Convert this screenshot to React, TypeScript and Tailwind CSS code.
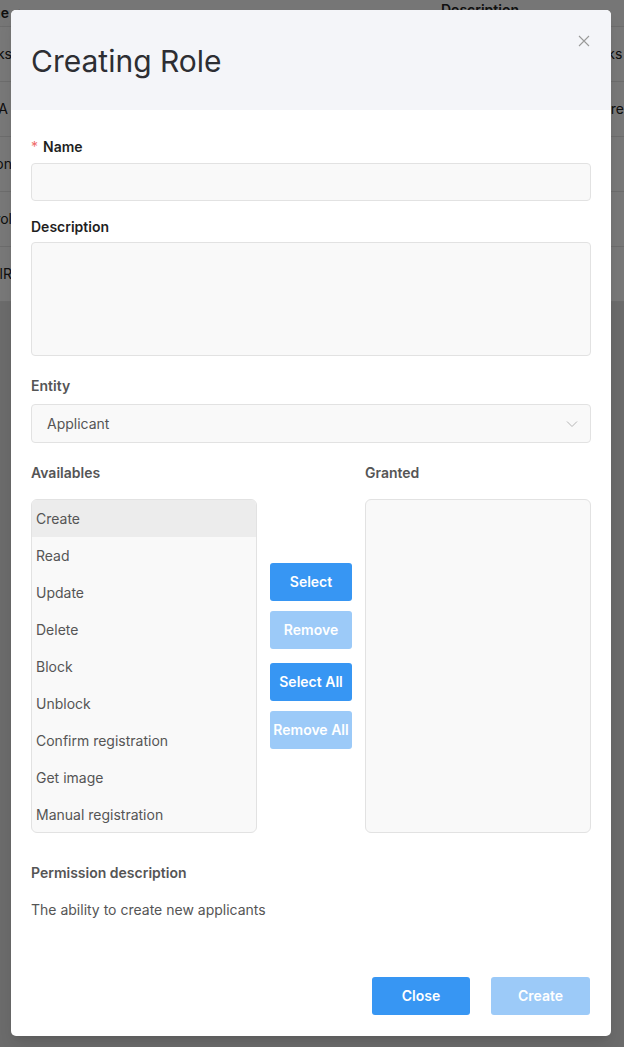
import React from 'react';

const rows = [
    { left: 'Tasks', right: 'Tasks', offset: 'ml-[572px]' },
    { left: 'UserA', right: 'Hire', offset: 'ml-[589px]' },
    { left: 'Operation', right: '', offset: 'ml-[600px]' },
    { left: 'Control', right: '', offset: 'ml-[600px]' },
    { left: 'MailR', right: '', offset: 'ml-[600px]' },
];

const permissions = [
    'Create',
    'Read',
    'Update',
    'Delete',
    'Block',
    'Unblock',
    'Confirm registration',
    'Get image',
    'Manual registration',
];

const BackgroundTable = () => {
    return (
        <div className="w-full">
            <div className="flex h-[27px] items-center bg-[#fafafa] border-b border-[#e5e5e5] text-sm font-semibold text-[#222]">
                <div className="w-[441px] flex items-center">
                    <div className="w-[9px] overflow-hidden whitespace-nowrap flex justify-end">
                        <span>Name</span>
                    </div>
                    <span className="ml-[5px] text-[10px] text-[#999]">▲</span>
                </div>
                <div className="translate-y-[-3px]">Description</div>
            </div>
            {rows.map((r) => (
                <div key={r.left} className="flex h-[55px] items-center bg-white border-b border-[#e5e5e5] text-sm text-[#222]">
                    <div className="w-[12px] overflow-hidden whitespace-nowrap flex justify-end">
                        <span>{r.left}</span>
                    </div>
                    <div className={`${r.offset} whitespace-nowrap`}>{r.right}</div>
                </div>
            ))}
        </div>
    );
};

const Label = ({ children, dark }: { children: React.ReactNode; dark?: boolean }) => (
    <div className={`h-5 flex items-center text-sm font-semibold ${dark ? 'text-[#1f1f1f]' : 'text-[#555]'}`}>{children}</div>
);

export default function App() {
    return (
        <div className="relative h-[1047px] w-[624px] overflow-hidden bg-[#e4e4e4] font-['Inter',sans-serif]">
            <BackgroundTable />
            <div className="absolute inset-0 bg-black/[0.53]"></div>

            <div className="absolute left-[11px] top-[10px] w-[600px] h-[1026px] bg-white rounded-[5px] shadow-lg overflow-hidden flex flex-col">
                <div className="h-[100px] bg-[#f4f5f9] flex items-center justify-between px-5 shrink-0">
                    <h2 className="text-[30px] text-[#2d2e33] pt-[2px] leading-none">Creating Role</h2>
                    <button className="self-start mt-[25px] mr-[1px] text-[#9a9a9a]">
                        <svg width="12" height="12" viewBox="0 0 12 12" fill="none" stroke="currentColor" strokeWidth="1.1">
                            <path d="M1 1L11 11M11 1L1 11" />
                        </svg>
                    </button>
                </div>

                <div className="flex-1 px-5 pt-[27px] pb-[21px] flex flex-col">
                    <Label dark>
                        <span className="text-[#ef6b6b] mr-[5px] font-normal">*</span>Name
                    </Label>
                    <div className="mt-[6px] h-[38px] rounded-[4px] border border-[#e2e2e2] bg-[#f9f9f9]"></div>

                    <div className="mt-[16px]">
                        <Label dark>Description</Label>
                    </div>
                    <div className="mt-[5px] h-[114px] rounded-[4px] border border-[#e2e2e2] bg-[#f9f9f9]"></div>

                    <div className="mt-[20px]">
                        <Label>Entity</Label>
                    </div>
                    <div className="mt-[8px] h-[39px] rounded-[4px] border border-[#e2e2e2] bg-[#f9f9f9] flex items-center justify-between pl-[15px] pr-[12px]">
                        <span className="text-sm text-[#555]">Applicant</span>
                        <svg width="12" height="8" viewBox="0 0 12 8" fill="none" stroke="#b5b5b5" strokeWidth="1">
                            <path d="M1 1.5L6 6.5L11 1.5" />
                        </svg>
                    </div>

                    <div className="mt-[20px] flex gap-[13px]">
                        <div className="w-[226px]">
                            <Label>Availables</Label>
                            <div className="mt-[16px] h-[334px] rounded-[6px] border border-[#e2e2e2] bg-[#f9f9f9] overflow-hidden">
                                {permissions.map((p, i) => (
                                    <div key={p} className={`h-[37px] flex items-center px-[4px] text-sm text-[#555] ${i === 0 ? 'bg-[#ececec]' : ''}`}>
                                        {p}
                                    </div>
                                ))}
                            </div>
                        </div>
                        <div className="w-[82px] pt-[100px] flex flex-col">
                            <button className="h-[38px] rounded-[3px] bg-[#3796f3] text-white text-sm font-semibold">Select</button>
                            <button className="mt-[10px] h-[38px] rounded-[3px] bg-[#9ccaf8] text-white text-sm font-semibold">Remove</button>
                            <button className="mt-[14px] h-[38px] rounded-[3px] bg-[#3796f3] text-white text-sm font-semibold">Select All</button>
                            <button className="mt-[10px] h-[38px] rounded-[3px] bg-[#9ccaf8] text-white text-sm font-semibold whitespace-nowrap">Remove All</button>
                        </div>
                        <div className="w-[226px]">
                            <Label>Granted</Label>
                            <div className="mt-[16px] h-[334px] rounded-[6px] border border-[#e2e2e2] bg-[#f9f9f9]"></div>
                        </div>
                    </div>

                    <div className="mt-[30px]">
                        <Label>Permission description</Label>
                    </div>
                    <p className="mt-[17px] h-5 flex items-center text-sm text-[#555]">The ability to create new applicants</p>

                    <div className="mt-auto flex justify-end gap-[21px] pr-[1px]">
                        <button className="w-[98px] h-[38px] rounded-[3px] bg-[#3796f3] text-white text-sm font-semibold">Close</button>
                        <button className="w-[99px] h-[38px] rounded-[3px] bg-[#9ccaf8] text-white text-sm font-semibold">Create</button>
                    </div>
                </div>
            </div>
        </div>
    );
}
